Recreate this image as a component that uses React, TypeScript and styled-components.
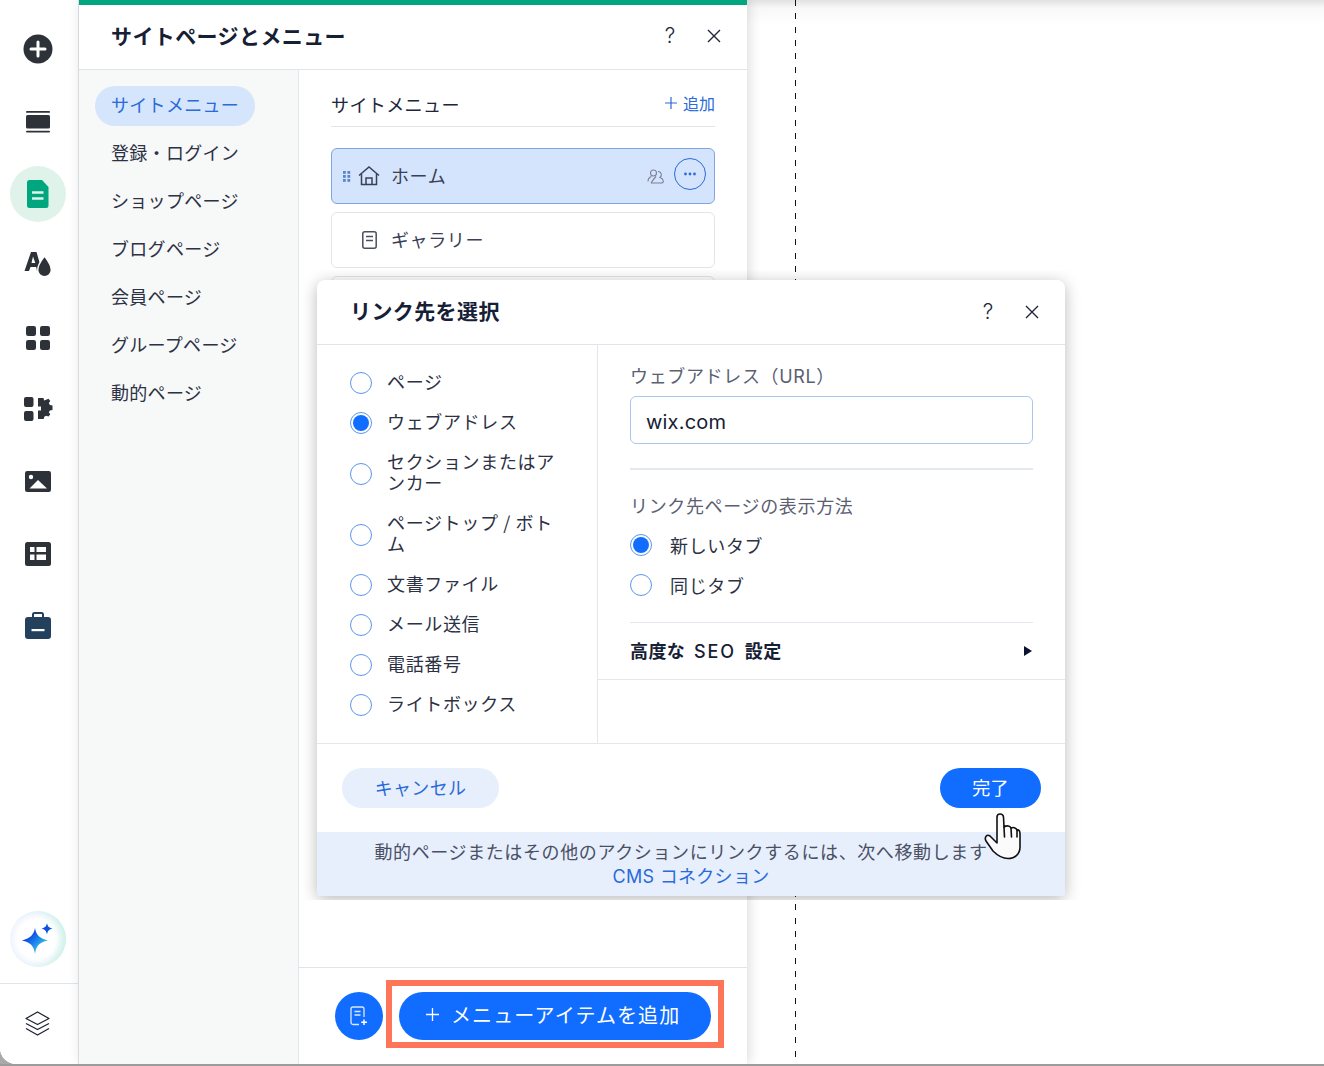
import React from "react";
import styled, { createGlobalStyle } from "styled-components";

const Global = createGlobalStyle`
  html, body { margin: 0; padding: 0; background: #a9a9a9; }
  body { font-family: "Inter", "Noto Sans CJK JP", sans-serif; color: #1c2333; overflow: hidden; }
  * { box-sizing: border-box; }
`;

const Screen = styled.div`
  position: relative;
  width: 1324px;
  height: 1066px;
  overflow: hidden;
`;
const Win = styled.div`
  display: flex;
  width: 1324px;
  height: 1064px;
  background: #fff;
  border-bottom-left-radius: 16px;
  overflow: hidden;
`;
const Rail = styled.nav`
  width: 79px;
  flex: none;
  display: flex;
  flex-direction: column;
  border-right: 1px solid #dfe5eb;
  background: #fff;
  padding-top: 14px;
`;
const RailItem = styled.div`
  height: 72px;
  flex: none;
  display: flex;
  align-items: center;
  justify-content: center;
  padding-right: 2px;
  & > svg { display: block; }
`;
const RailBubble = styled.div`
  width: 56px;
  height: 56px;
  border-radius: 50%;
  background: #dff3ea;
  display: flex;
  align-items: center;
  justify-content: center;
`;
const RailBottom = styled.div`
  margin-top: auto;
  display: flex;
  flex-direction: column;
  align-items: center;
`;
const AiBubble = styled.div`
  width: 56px;
  height: 56px;
  border-radius: 50%;
  margin: 0 2px 16px 0;
  background: radial-gradient(circle at 48% 50%, #fff 48%, #e9f0fe 72%, #d5ddfb 100%);
  display: flex;
  align-items: center;
  justify-content: center;
  box-shadow: inset -7px 0 10px -4px #c8f3e0;
`;
const RailFoot = styled.div`
  width: 100%;
  height: 81px;
  border-top: 1px solid #dfe5eb;
  display: flex;
  align-items: center;
  justify-content: center;
  padding: 0 4px 2px 0;
`;
const Panel = styled.section`
  width: 668px;
  flex: none;
  display: flex;
  flex-direction: column;
  background: #fff;
  border-top: 5px solid #00a67e;
  box-shadow: 2px 0 12px rgba(0, 0, 0, 0.14);
  position: relative;
  z-index: 1;
`;
const PanelHead = styled.header`
  height: 65px;
  flex: none;
  display: flex;
  align-items: center;
  padding: 0 21px 2px 32px;
  border-bottom: 1px solid #dfe5eb;
`;
const PanelTitle = styled.h1<{ $lift: number }>`
  margin: 0;
  padding-bottom: ${(p) => p.$lift}px;
  flex: 1;
  font-size: 21px;
  font-weight: 700;
  letter-spacing: 0.4px;
  color: #162035;
`;
const HeadTool = styled.span`
  font-size: 21px;
  font-weight: 300;
  line-height: 24px;
  color: #20263a;
  width: 44px;
  display: flex;
  justify-content: center;
  &:last-child { width: 24px; margin-left: 10px; }
`;
const PanelBody = styled.div`
  flex: 1;
  display: flex;
  min-height: 0;
`;
const SideNav = styled.div`
  width: 220px;
  flex: none;
  background: #f7f8f8;
  border-right: 1px solid #e3e7ec;
  padding: 16px 0 0 16px;
  display: flex;
  flex-direction: column;
  align-items: flex-start;
  gap: 8px;
`;
const NavItem = styled.div<{ $active?: boolean }>`
  height: 40px;
  line-height: 40px;
  padding: 0 16px;
  border-radius: 20px;
  font-size: 18px;
  letter-spacing: 0.3px;
  white-space: nowrap;
  color: ${(p) => (p.$active ? "#2a6bd9" : "#2c3144")};
  background: ${(p) => (p.$active ? "#d5e5fc" : "transparent")};
  ${(p) => (p.$active ? "width: 160px;" : "")}
`;
const Main = styled.div`
  flex: 1;
  display: flex;
  flex-direction: column;
  min-width: 0;
`;
const MenuArea = styled.div`
  flex: 1;
  padding: 0 32px;
`;
const MenuHead = styled.div`
  height: 57px;
  padding-top: 20px;
  display: flex;
  align-items: flex-start;
  justify-content: space-between;
  border-bottom: 1px solid #dfe5eb;
  margin-bottom: 21px;
`;
const MenuHeading = styled.span`
  font-size: 18px;
  line-height: 32px;
  letter-spacing: 0.4px;
  color: #20263a;
`;
const AddLink = styled.span`
  font-size: 16px;
  height: 32px;
  margin-top: -3px;
  color: #2a6bd9;
  display: flex;
  gap: 6px;
  align-items: center;
`;
const MenuRow = styled.div<{ $active?: boolean }>`
  height: 56px;
  margin-bottom: 8px;
  display: flex;
  align-items: center;
  border-radius: 6px;
  border: 1px solid ${(p) => (p.$active ? "#7ea7e2" : "#dfe5eb")};
  background: ${(p) => (p.$active ? "#d3e4fc" : "#fff")};
  padding: 0 8px 0 11px;
`;
const RowHandle = styled.span`
  width: 11px;
  flex: none;
  display: flex;
`;
const RowIcon = styled.span`
  width: 30px;
  flex: none;
  display: flex;
  justify-content: center;
`;
const RowLabel = styled.span`
  flex: 1;
  margin-left: 7px;
  padding-bottom: 2px;
  font-size: 18px;
  letter-spacing: 0.6px;
  color: #3b4057;
`;
const MoreBtn = styled.span`
  width: 32px;
  height: 32px;
  border-radius: 50%;
  border: 1.5px solid #2a6bd9;
  margin-left: 10px;
  margin-top: -4px;
  display: flex;
  align-items: center;
  justify-content: center;
`;
const PanelFoot = styled.footer`
  height: 97px;
  flex: none;
  border-top: 1px solid #dfe5eb;
  padding: 12px 0 0 36px;
  display: flex;
  align-items: flex-start;
  gap: 3px;
`;
const RoundAdd = styled.div`
  width: 48px;
  height: 48px;
  border-radius: 50%;
  background: #116dff;
  margin-top: 12px;
  display: flex;
  align-items: center;
  justify-content: center;
`;
const Highlight = styled.div`
  border: 6px solid #ff7559;
  padding: 0 7px 2px;
  height: 68px;
  display: flex;
  align-items: flex-end;
`;
const AddButton = styled.button`
  width: 312px;
  height: 48px;
  border: 0;
  border-radius: 24px;
  background: #116dff;
  color: #fff;
  font: inherit;
  font-size: 20px;
  letter-spacing: 1.1px;
  display: flex;
  align-items: center;
  padding: 0 0 3px 27px;
  gap: 12px;
`;
const Canvas = styled.main`
  flex: 1;
  padding-left: 48px;
  background: linear-gradient(#e2e2e2, #f8f8f8 8px, #fff 24px);
`;
const Guide = styled.div`
  width: 1px;
  height: 100%;
  background: repeating-linear-gradient(#111 0 6px, transparent 6px 13.3px);
`;
const BottomLine = styled.div`
  height: 2px;
  background: #9c9c9c;
`;

const DialogClip = styled.div`
  position: absolute;
  left: 299px;
  top: 270px;
  width: 791px;
  height: 630px;
  overflow: hidden;
  padding: 10px 25px 4px 18px;
  z-index: 2;
`;
const Dialog = styled.div`
  width: 748px;
  height: 616px;
  background: #fff;
  border-radius: 8px 8px 4px 4px;
  box-shadow: 0 3px 16px rgba(0, 0, 0, 0.28);
  display: flex;
  flex-direction: column;
  overflow: hidden;
`;
const DialogHead = styled.header`
  height: 65px;
  flex: none;
  display: flex;
  align-items: center;
  padding: 0 21px 0 33px;
  border-bottom: 1px solid #dfe5eb;
`;
const DialogBody = styled.div`
  height: 399px;
  flex: none;
  display: flex;
  border-bottom: 1px solid #e3e7ec;
`;
const TypeList = styled.div`
  width: 281px;
  flex: none;
  border-right: 1px solid #e3e7ec;
  padding: 18px 38px 0 33px;
`;
const TypeRow = styled.label`
  display: flex;
  align-items: center;
  gap: 15px;
  font-family: "Noto Sans CJK JP", sans-serif;
  font-size: 18px;
  line-height: 21px;
  letter-spacing: 0.65px;
  color: #2c3144;
`;
const TypeText = styled.span`
  display: block;
  padding: 7.5px 0 11.5px;
`;
const Radio = styled.span<{ $on?: boolean }>`
  width: 22px;
  height: 22px;
  flex: none;
  border-radius: 50%;
  border: 1.5px solid #5b96e8;
  background: #fff;
  padding: 1.5px;
  display: block;
  &::after {
    content: "";
    display: ${(p) => (p.$on ? "block" : "none")};
    width: 16px;
    height: 16px;
    border-radius: 50%;
    background: #116dff;
  }
`;
const Settings = styled.div`
  flex: 1;
  display: flex;
  flex-direction: column;
`;
const SettingsInner = styled.div`
  padding: 19px 32px 0;
`;
const FieldLabel = styled.div`
  font-size: 18px;
  line-height: 26px;
  letter-spacing: 0.65px;
  color: #5a6072;
`;
const UrlInput = styled.div`
  height: 48px;
  margin-top: 6px;
  border: 1px solid #a9c6ec;
  border-radius: 6px;
  padding: 3px 15px 0;
  display: flex;
  align-items: center;
  font-size: 20px;
  letter-spacing: 0.2px;
  color: #162035;
`;
const Rule = styled.div`
  height: 2px;
  background: #e3e8f0;
  margin: 24px 0 24px;
`;
const TargetRow = styled.label`
  display: flex;
  align-items: center;
  gap: 18px;
  height: 40px;
  font-size: 18px;
  letter-spacing: 0.65px;
  color: #2c3144;
`;
const Targets = styled.div`
  margin-top: 5px;
  padding-bottom: 17px;
  border-bottom: 1px solid #e3e8f0;
`;
const SeoRow = styled.div`
  height: 57px;
  padding: 0 32px 2px;
  display: flex;
  align-items: center;
  justify-content: space-between;
  border-bottom: 1px solid #e3e7ec;
  font-size: 18px;
  font-weight: 700;
  letter-spacing: 0.4px;
  word-spacing: 4px;
  color: #162035;
`;
const SeoAbbr = styled.span`
  font-weight: 500;
  letter-spacing: 2px;
`;
const Caret = styled.span`
  width: 0;
  height: 0;
  margin: 2px 1px 0 0;
  border-left: 8px solid #0c1330;
  border-top: 5px solid transparent;
  border-bottom: 5px solid transparent;
`;
const DialogFoot = styled.div`
  flex: 1;
  display: flex;
  justify-content: space-between;
  align-items: flex-start;
  padding: 24px 24px 0 25px;
`;
const Pill = styled.button<{ $primary?: boolean }>`
  height: 40px;
  padding: 0 0 2px;
  width: ${(p) => (p.$primary ? "101px" : "157px")};
  border: 0;
  border-radius: 20px;
  font: inherit;
  font-size: 18px;
  letter-spacing: 0.3px;
  color: ${(p) => (p.$primary ? "#fff" : "#2a6bd9")};
  background: ${(p) => (p.$primary ? "#116dff" : "#e7effd")};
`;
const Banner = styled.div`
  height: 64px;
  flex: none;
  background: #e7effd;
  padding-top: 9px;
  text-align: center;
  font-size: 18px;
  line-height: 24px;
  letter-spacing: 0.62px;
  color: #4a5064;
`;
const BannerLine = styled.div`
  padding-right: 20px;
`;
const BannerLink = styled.div`
  color: #2a6bd9;
  letter-spacing: 0.3px;
`;
const Pointer = styled.svg`
  position: absolute;
  left: 983px;
  top: 810px;
  z-index: 3;
`;

const DARK = "#2d3138";

const Plus = () => (
  <svg width="30" height="32" viewBox="0 0 30 32">
    <circle cx="15" cy="15" r="14.5" fill={DARK} />
    <path d="M15 8v14M8 15h14" stroke="#fff" strokeWidth="3" strokeLinecap="round" />
  </svg>
);
const Strips = () => (
  <svg width="24" height="22" viewBox="0 0 24 22" fill={DARK}>
    <rect x="0" y="0" width="24" height="1.800" rx="0.900" />
    <rect x="0" y="4" width="24" height="13.500" rx="1.500" />
    <rect x="0" y="19.700" width="24" height="1.800" rx="0.900" />
  </svg>
);
const PageIcon = () => (
  <svg width="22" height="28" viewBox="0 0 22 28">
    <path d="M2.500 0H15l6.500 7v18.500A2.500 2.500 0 0 1 19 28H2.500A2.500 2.500 0 0 1 0 25.500V2.500A2.500 2.500 0 0 1 2.500 0Z" fill="#00a67e" />
    <path d="M5 12.500h11.500M5 18.500h11.500" stroke="#dff3ea" strokeWidth="2.600" />
  </svg>
);
const Palette = () => (
  <svg width="28" height="28" viewBox="0 0 28 28" fill={DARK}>
    <path fillRule="evenodd" d="M7 0H12.500L18 19H13L12.200 15H6.500L5 19H.5ZM9 4.500 7.500 11H11.300Z" />
    <path d="M20.500 4c3 4 6.800 8.500 6.800 14a6.800 6.800 0 0 1-13.600 0c0-5.500 3.800-10 6.800-14Z" stroke="#fff" strokeWidth="1.400" />
  </svg>
);
const Apps = () => (
  <svg width="24" height="24" viewBox="0 0 24 24" fill={DARK}>
    <rect width="10" height="10" rx="2.200" />
    <rect x="14" width="10" height="10" rx="2.200" />
    <rect y="14" width="10" height="10" rx="2.200" />
    <rect x="14" y="14" width="10" height="10" rx="2.200" />
  </svg>
);
const Puzzle = () => (
  <svg width="29" height="26" viewBox="0 0 29 26" fill={DARK}>
    <rect y="0" width="9.500" height="10" rx="2" />
    <rect y="14" width="9.500" height="10" rx="2" />
    <path d="M14 1h5.500l.6 2.500 2-.8 2.400-1 1.800 2.400-1.500 2 1.100 1.900 2.600.4v4.500l-2.600.5-1.100 1.900 1.500 2-1.800 2.300-2.400-.9-1.800 1-.6 2.300H14v-8.500h3V9.500h-3Z" />
  </svg>
);
const ImageIcon = () => (
  <svg width="26" height="23" viewBox="0 0 26 23">
    <rect width="26" height="21" rx="2.200" fill={DARK} />
    <circle cx="6" cy="6" r="2.200" fill="#fff" />
    <path d="M4.500 17.500 13 9l9 8.500Z" fill="#fff" />
  </svg>
);
const TableIcon = () => (
  <svg width="26" height="24" viewBox="0 0 26 24">
    <rect width="26" height="24" rx="2.500" fill={DARK} />
    <path d="M5 5h4.500v5H5ZM11.500 5H21v5h-9.500ZM5 12.500h4.500V18H5ZM11.500 12.500H21V18h-9.500Z" fill="#fff" />
  </svg>
);
const Case = () => (
  <svg width="26" height="29" viewBox="0 0 26 29">
    <path d="M8 6V2.500A1.500 1.500 0 0 1 9.500 1h7A1.500 1.500 0 0 1 18 2.500V6" fill="none" stroke="#23415c" strokeWidth="2" />
    <rect y="5" width="26" height="22" rx="3" fill="#23415c" />
    <rect x="6.500" y="17" width="13" height="2.200" fill="#fff" />
  </svg>
);
const Sparkle = () => (
  <svg width="32" height="32" viewBox="0 0 32 32">
    <defs>
      <linearGradient id="spark" x1="0" y1="0" x2="1" y2="1">
        <stop offset="0.25" stopColor="#0b3fe0" />
        <stop offset="0.55" stopColor="#1d8cf0" />
        <stop offset="0.85" stopColor="#5fdcc0" />
      </linearGradient>
    </defs>
    <path d="M13 6c1.200 7 4 10 13 12.500C17 20.500 14.500 23.500 13 32 11.500 23.500 8.500 20.500 0 18.500 8.500 16 11.700 13 13 6Z" fill="url(#spark)" transform="translate(0 -1)" />
    <path d="M25 0c.6 3.300 1.800 4.600 5.500 5.500C26.800 6.500 25.700 8 25 11.500 24.300 8 23 6.500 19.500 5.500 23 4.600 24.400 3.300 25 0Z" fill="#1150e6" />
  </svg>
);
const Layers = () => (
  <svg width="25" height="25" viewBox="0 0 25 25" fill="none" stroke="#1c2333" strokeWidth="1.300" strokeLinejoin="round">
    <path d="M12.500 1 24 7.500 12.500 13.500 1 7.500Z" />
    <path d="M1 12.500 12.500 18.500 24 12.500" />
    <path d="M1 17.500 12.500 24 24 17.500" />
  </svg>
);
const Close = ({ size = 14 }: { size?: number }) => (
  <svg width={size} height={size} viewBox="0 0 14 14" stroke="#20263a" strokeWidth="1.400">
    <path d="M1 1l12 12M13 1 1 13" />
  </svg>
);
const Handle = () => (
  <svg width="8" height="11" viewBox="0 0 8 11" fill="#5a86c8">
    {[0, 4, 8].map((y) => (
      <React.Fragment key={y}>
        <rect x="0" y={y} width="2.800" height="2.800" />
        <rect x="4.400" y={y} width="2.800" height="2.800" />
      </React.Fragment>
    ))}
  </svg>
);
const Home = () => (
  <svg width="22" height="20" viewBox="0 0 22 20" fill="none" stroke="#3b4057" strokeWidth="1.500">
    <path d="M1 9.500 11 1l10 8.500" />
    <path d="M3.500 8v10.500h15V8" />
    <path d="M8 18.500V12h6v6.500" />
  </svg>
);
const Doc = () => (
  <svg width="15" height="18" viewBox="0 0 15 18" fill="none" stroke="#4a4e5e" strokeWidth="1.500">
    <rect x="0.800" y="0.800" width="13.400" height="16.400" rx="2" />
    <path d="M4 5.500h7M4 9.500h7" />
  </svg>
);
const Members = () => (
  <svg width="17" height="15" viewBox="0 0 17 15" fill="none" stroke="#7d8296" strokeWidth="1.100">
    <circle cx="6.500" cy="4" r="3" />
    <path d="M1 12.500c0-3 2-4.500 3.500-5M4 14h10c1.500 0 2.500-.5 2.300-2-.3-2-2-3-3.300-3.500 1-.8 1.500-2 1.200-3.500-.3-1.500-1.700-2.500-3.200-2.500" />
    <path d="M9 7.500c-1 1-3 3.500-5 6.500" />
  </svg>
);
const Dots = () => (
  <svg width="14" height="4" viewBox="0 0 14 4" fill="#2a6bd9">
    <circle cx="2.500" cy="2" r="1.400" />
    <circle cx="7" cy="2" r="1.400" />
    <circle cx="11.500" cy="2" r="1.400" />
  </svg>
);
const SmallPlus = ({ size, color }: { size: number; color: string }) => (
  <svg width={size} height={size} viewBox="0 0 12 12" stroke={color} strokeWidth="1.200">
    <path d="M6 0v12M0 6h12" />
  </svg>
);
const DocAdd = () => (
  <svg width="18" height="20" viewBox="0 0 18 20" fill="none" stroke="#dce9ff" strokeWidth="1.300">
    <path d="M9 18.500H3a2 2 0 0 1-2-2V3a2 2 0 0 1 2-2h9a2 2 0 0 1 2 2v8" />
    <path d="M4.500 5.500h6M4.500 9h6" />
    <path d="M14 13.500v5.500M11.200 16.200H17" stroke="#fff" strokeWidth="1.500" />
  </svg>
);

const NAV = ["サイトメニュー", "登録・ログイン", "ショップページ", "ブログページ", "会員ページ", "グループページ", "動的ページ"];
const TYPES = ["ページ", "ウェブアドレス", "セクションまたはアンカー", "ページトップ / ボトム", "文書ファイル", "メール送信", "電話番号", "ライトボックス"];
const RAIL = [<Plus />, <Strips />, null, <Palette />, <Apps />, <Puzzle />, <ImageIcon />, <TableIcon />, <Case />];

export default function App() {
  return (
    <Screen>
      <Global />
      <Win>
        <Rail>
          {RAIL.map((icon, i) => (
            <RailItem key={i}>{icon ?? <RailBubble><PageIcon /></RailBubble>}</RailItem>
          ))}
          <RailBottom>
            <AiBubble><Sparkle /></AiBubble>
            <RailFoot><Layers /></RailFoot>
          </RailBottom>
        </Rail>
        <Panel>
          <PanelHead>
            <PanelTitle $lift={2}>サイトページとメニュー</PanelTitle>
            <HeadTool>?</HeadTool>
            <HeadTool><Close /></HeadTool>
          </PanelHead>
          <PanelBody>
            <SideNav>
              {NAV.map((n, i) => (
                <NavItem key={n} $active={i === 0}>{n}</NavItem>
              ))}
            </SideNav>
            <Main>
              <MenuArea>
                <MenuHead>
                  <MenuHeading>サイトメニュー</MenuHeading>
                  <AddLink><SmallPlus size={12} color="#2a6bd9" />追加</AddLink>
                </MenuHead>
                <MenuRow $active>
                  <RowHandle><Handle /></RowHandle>
                  <RowIcon><Home /></RowIcon>
                  <RowLabel>ホーム</RowLabel>
                  <Members />
                  <MoreBtn><Dots /></MoreBtn>
                </MenuRow>
                <MenuRow>
                  <RowHandle />
                  <RowIcon><Doc /></RowIcon>
                  <RowLabel>ギャラリー</RowLabel>
                </MenuRow>
                <MenuRow />
              </MenuArea>
              <PanelFoot>
                <RoundAdd><DocAdd /></RoundAdd>
                <Highlight>
                  <AddButton>
                    <SmallPlus size={13} color="#fff" />
                    メニューアイテムを追加
                  </AddButton>
                </Highlight>
              </PanelFoot>
            </Main>
          </PanelBody>
        </Panel>
        <Canvas><Guide /></Canvas>
      </Win>
      <BottomLine />
      <DialogClip>
        <Dialog>
          <DialogHead>
            <PanelTitle $lift={4}>リンク先を選択</PanelTitle>
            <HeadTool>?</HeadTool>
            <HeadTool><Close /></HeadTool>
          </DialogHead>
          <DialogBody>
            <TypeList>
              {TYPES.map((t, i) => (
                <TypeRow key={t}>
                  <Radio $on={i === 1} />
                  <TypeText>{t}</TypeText>
                </TypeRow>
              ))}
            </TypeList>
            <Settings>
              <SettingsInner>
                <FieldLabel>ウェブアドレス（URL）</FieldLabel>
                <UrlInput>wix.com</UrlInput>
                <Rule />
                <FieldLabel>リンク先ページの表示方法</FieldLabel>
                <Targets>
                  <TargetRow><Radio $on />新しいタブ</TargetRow>
                  <TargetRow><Radio />同じタブ</TargetRow>
                </Targets>
              </SettingsInner>
              <SeoRow><span>高度な <SeoAbbr>SEO</SeoAbbr> 設定</span><Caret /></SeoRow>
            </Settings>
          </DialogBody>
          <DialogFoot>
            <Pill>キャンセル</Pill>
            <Pill $primary>完了</Pill>
          </DialogFoot>
          <Banner>
            <BannerLine>動的ページまたはその他のアクションにリンクするには、次へ移動します</BannerLine>
            <BannerLink>CMS コネクション</BannerLink>
          </Banner>
        </Dialog>
      </DialogClip>
      <Pointer width="40" height="52" viewBox="0 0 40 52" fill="#fbfbfb" stroke="#111" strokeWidth="1.600" strokeLinejoin="round" strokeLinecap="round">
        <path d="M14 7C14 3 20 3 20.500 7L21 17C24 15 27 16 28 18C30 17 33 17.500 34 20C36 19.500 37 21 37 24V37C37 44 32 48.500 25 48.500C18 48.500 14 45 10 41L3 31C1 27 4 24 7 26L14 33Z" />
        <path d="M21 17 21.500 27M28 18 28.500 27M34 20V27" fill="none" />
      </Pointer>
    </Screen>
  );
}
